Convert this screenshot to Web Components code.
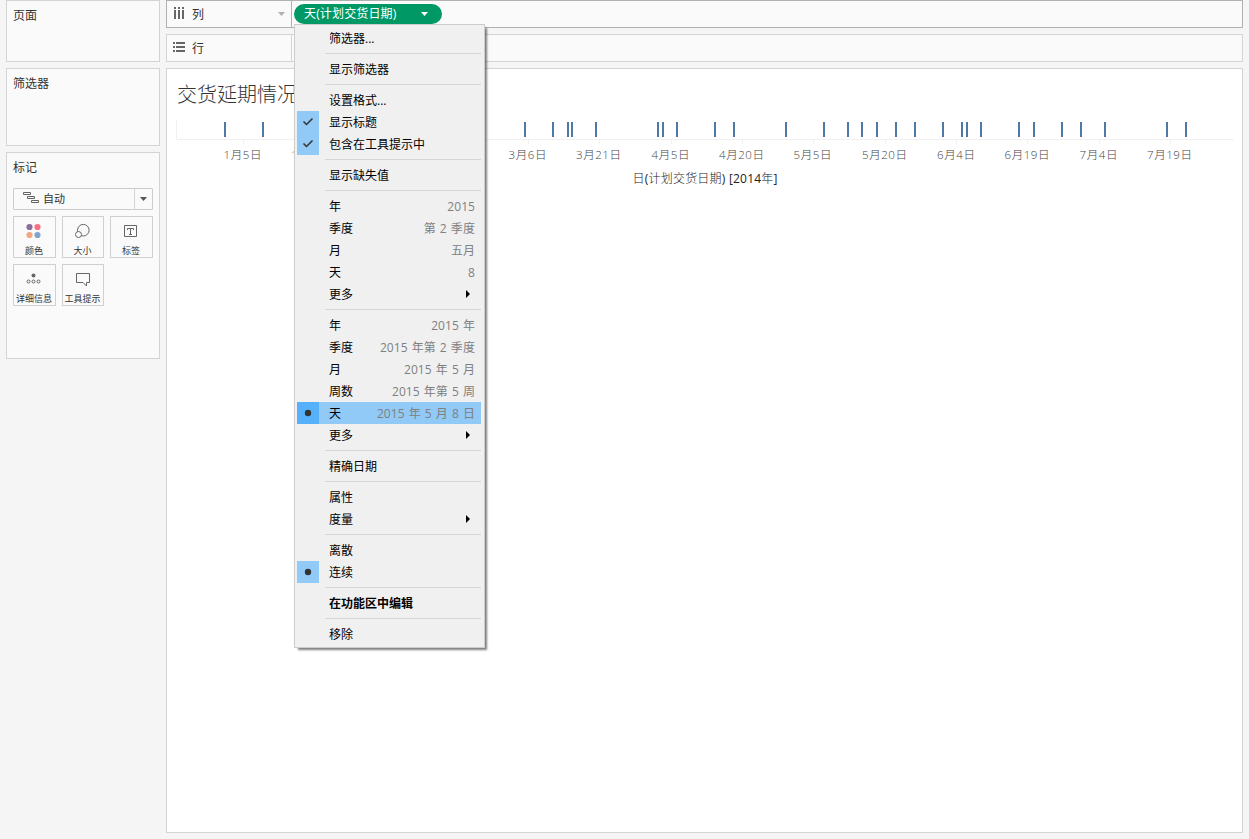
<!DOCTYPE html>
<html lang="zh-CN">
<head>
<meta charset="utf-8">
<title>交货延期情况</title>
<style>
html,body{margin:0;height:100%;overflow:hidden;background:#f5f5f5}
body{font:12px "Open Sans","Noto Sans CJK SC",sans-serif;color:#333}
</style>
</head>
<body>
<work-book></work-book>
<script>
const define = (name, html, setup) => customElements.define(name, class extends HTMLElement {
  connectedCallback() {
    if (this.shadowRoot) return;
    const t = document.createElement('template');
    t.innerHTML = typeof html === 'function' ? html(this) : html;
    this.attachShadow({mode: 'open'}).append(t.content.cloneNode(true));
    if (setup) setup(this);
  }
});

define('side-card', `
<style>
:host{display:flex;flex-direction:column;box-sizing:border-box;background:#fafafa;border:1px solid #d4d4d4;padding:6px 6px 0}
h2{margin:0;font-size:12px;font-weight:400;line-height:18px;height:18px}
</style><h2><slot name="title"></slot></h2><slot></slot>`);

define('mark-type', `
<style>
:host{display:flex;box-sizing:border-box;height:22px;margin-top:11px;border:1px solid #ccc;border-radius:1px;font-size:11px;line-height:19px}
.v{flex:1;display:flex;padding-left:9px;gap:3px}
.d{width:17px;border-left:1px solid #d4d4d4;display:flex;align-items:center;justify-content:center}
svg{display:block}
</style>
<div class="v"><svg width="17" height="20" fill="none" stroke="#666"><path d="M.5 3.500h7v2h-7zM4.500 7.500h7v2h-7zM8.500 11.500h7v2h-7z"/></svg><span>自动</span></div>
<div class="d"><svg width="7" height="4"><path d="M0 0h7L3.500 4z" fill="#555"/></svg></div>`);

const glyphs = {
  color: '<circle cx="4.500" cy="4" r="3.100" fill="#86709b"/><circle cx="12.500" cy="4" r="3.100" fill="#fb6f82"/><circle cx="4.500" cy="12" r="3.100" fill="#f4a680"/><circle cx="12.500" cy="12" r="3.100" fill="#83a3cf"/>',
  size: '<circle cx="9.300" cy="7.200" r="5.800" fill="none" stroke="#666"/><circle cx="4.500" cy="11.500" r="3" fill="#fafafa" stroke="#666"/>',
  label: '<path d="M2.500 2.500h12v11h-12z" fill="none" stroke="#666"/><path d="M5.500 7V5.500h6V7M8.500 5.500v6M7 11.500h3" fill="none" stroke="#666"/>',
  detail: '<circle cx="8.500" cy="4.500" r="2" fill="#666"/><g fill="none" stroke="#666"><circle cx="3.500" cy="10.500" r="1.500"/><circle cx="8.500" cy="10.500" r="1.500"/><circle cx="13.500" cy="10.500" r="1.500"/></g>',
  tooltip: '<path d="M2.500 2.500h13v9H12.500v3.500L9 11.500H2.500z" fill="none" stroke="#666" stroke-linejoin="round"/>'
};
define('mark-button', el => `
<style>
:host{display:flex;flex-direction:column;align-items:center;box-sizing:border-box;height:42px;border:1px solid #d0d0d0;padding:6px 1px 0 0;font-size:9px;line-height:13px;white-space:nowrap}
svg{display:block;flex:none;margin-left:-1px}
span{margin-top:4px}
</style><svg width="17" height="17">${glyphs[el.getAttribute('icon')]}</svg><span><slot></slot></span>`);

define('shelf-bar', el => `
<style>
:host{--line:#d4d4d4;display:flex;box-sizing:border-box;height:28px;border:1px solid var(--line);background:#fafafa}
:host([active]){--line:#b0b0b0}
.h{width:112px;border-right:1px solid var(--line);display:flex;align-items:center;padding:0 6px}
.h span{margin-left:7px;flex:1;line-height:20px;position:relative;top:1px}
.c{padding:3px 0 0 2px;display:flex;align-items:flex-start}
.g{margin-top:-2px}
</style>
<div class="h"><svg class="g" width="12" height="12" fill="#666">${el.hasAttribute('active')
  ? '<path d="M1 0h2v2H1zM5 0h2v2H5zM9 0h2v2H9zM1 3h2v9H1zM5 3h2v9H5zM9 3h2v9H9z"/>'
  : '<path d="M0 1h2v2H0zM3 1h9v2H3zM0 5h2v2H0zM3 5h9v2H3zM0 9h2v2H0zM3 9h9v2H3z"/>'}</svg>
<span><slot name="title"></slot></span>${el.hasAttribute('active') ? '<svg width="7" height="4"><path d="M0 0h7L3.500 4z" fill="#b0b0b0"/></svg>' : ''}</div>
<div class="c"><slot></slot></div>`);

define('field-pill', `
<style>
:host{display:flex;align-items:center;box-sizing:border-box;width:148px;height:20px;border-radius:10px;background:#009966;color:#fff;padding:0 14px 0 10px;justify-content:space-between;line-height:20px;letter-spacing:.15px}
</style><span><slot></slot></span><svg width="7" height="4"><path d="M0 0h7L3.500 4z" fill="#fff"/></svg>`);

define('date-chart', () => {
  const marks = [225,263,525,553,568,572,596,658,663,677,715,734,786,824,848,862,877,896,915,943,962,967,981,1019,1034,1062,1081,1105,1167,1186];
  const ticks = [[243,'1月5日'],[314,'1月20日'],[528,'3月6日'],[599,'3月21日'],[671,'4月5日'],[742,'4月20日'],[813,'5月5日'],[885,'5月20日'],[956.5,'6月4日'],[1027.5,'6月19日'],[1099,'7月4日'],[1170,'7月19日']];
  return `
<style>
:host{display:block}
svg{display:block}
text{font-family:"Open Sans","Noto Sans CJK SC",sans-serif;font-size:11.500px;font-weight:300;fill:#444;text-anchor:middle}
.t{font-size:12px;fill:#222}
.n{font-weight:400}
</style>
<svg width="1075" height="76" viewBox="167 116 1075 76">
<path d="M176.500 120v19.500H1234" fill="none" stroke="#f0f0f0"/>
${marks.map(x => `<rect x="${x - 1}" y="122" width="2" height="15" fill="#4e79a7"/>`).join('')}
${ticks.map(([x, s]) => `<path d="M${Math.floor(x) + .5} 140v4" stroke="#f0f0f0"/><text x="${x - .5}" y="159" textLength="${s.length === 4 ? 38 : 45}">${s}</text>`).join('')}
<text class="t" x="705" y="183" textLength="145">日<tspan class="n">(</tspan>计划交货日期<tspan class="n">) [2014</tspan>年<tspan class="n">]</tspan></text>
</svg>`;
});

define('view-sheet', `
<style>
:host{display:block;box-sizing:border-box;height:765px;background:#fff;border:1px solid #d4d4d4}
h1{margin:0;padding:11px 0 0 10px;height:36px;line-height:28px;font-size:20px;font-weight:300;font-family:"Noto Sans CJK SC",sans-serif;color:#333}
</style><h1><slot></slot></h1><date-chart></date-chart>`);

define('menu-item', el => {
  const c = el.getAttribute('mark');
  const mark = c === 'check' ? '<path d="M6.500 10.500l3 3L15.500 7.500" fill="none" stroke="#333" stroke-width="1.500"/>' : c === 'dot' ? '<circle cx="11" cy="11" r="3.200" fill="#333"/>' : '';
  const hint = el.getAttribute('hint');
  return `
<style>
:host{display:flex;height:22px;line-height:24px;color:#000}
:host([strong]){font-weight:700}
:host([on]){background:#91c9f7}
.g{width:22px;flex:none}
:host([mark]) .g{background:#91c9f7}
:host([on]) .g{background:#56b0fa}
svg{display:block}
.l{margin-left:10px;flex:1;white-space:nowrap}
.h{color:#808080;margin-right:6px;white-space:nowrap;word-spacing:.9px;letter-spacing:.06px}
.a{align-self:center;margin-right:11px;margin-top:-1px}
</style><div class="g"><svg width="22" height="22">${mark}</svg></div><span class="l"><slot></slot></span>${hint ? `<span class="h">${hint}</span>` : ''}${el.hasAttribute('more') ? '<svg class="a" width="4" height="8"><path d="M0 0l4 4-4 4z" fill="#000"/></svg>' : ''}`;
});

define('menu-line', `<style>:host{display:block;height:1px;margin:4px 0 4px 28px;background:#d5d5d5}</style>`);

define('field-menu', `
<style>
:host{display:block;box-sizing:border-box;width:191px;height:624px;padding:2px 3px 2px 2px;background:#f0f0f0;border:1px solid #ccc;box-shadow:3px 3px 2px -1px rgba(0,0,0,.5)}
</style>
<menu-item>筛选器...</menu-item><menu-line></menu-line>
<menu-item>显示筛选器</menu-item><menu-line></menu-line>
<menu-item>设置格式...</menu-item><menu-item mark="check">显示标题</menu-item><menu-item mark="check">包含在工具提示中</menu-item><menu-line></menu-line>
<menu-item>显示缺失值</menu-item><menu-line></menu-line>
<menu-item hint="2015">年</menu-item><menu-item hint="第 2 季度">季度</menu-item><menu-item hint="五月">月</menu-item><menu-item hint="8">天</menu-item><menu-item more>更多</menu-item><menu-line></menu-line>
<menu-item hint="2015 年">年</menu-item><menu-item hint="2015 年第 2 季度">季度</menu-item><menu-item hint="2015 年 5 月">月</menu-item><menu-item hint="2015 年第 5 周">周数</menu-item><menu-item on mark="dot" hint="2015 年 5 月 8 日">天</menu-item><menu-item more>更多</menu-item><menu-line></menu-line>
<menu-item>精确日期</menu-item><menu-line></menu-line>
<menu-item>属性</menu-item><menu-item more>度量</menu-item><menu-line></menu-line>
<menu-item>离散</menu-item><menu-item mark="dot">连续</menu-item><menu-line></menu-line>
<menu-item strong>在功能区中编辑</menu-item><menu-line></menu-line>
<menu-item>移除</menu-item>`);

define('work-book', `
<style>
:host{display:grid;grid-template-columns:154px 1077px;column-gap:6px;padding-left:6px;height:839px;box-sizing:border-box;position:relative}
aside,main{display:flex;flex-direction:column;gap:6px}
.p{height:62px}.f{height:78px}.m{height:207px}
.b{display:grid;grid-template-columns:43px 42px 43px;gap:6px;margin-top:6px}
field-menu{position:absolute;left:294px;top:24px}
</style>
<aside>
<side-card class="p"><span slot="title">页面</span></side-card>
<side-card class="f"><span slot="title">筛选器</span></side-card>
<side-card class="m"><span slot="title">标记</span><mark-type></mark-type>
<div class="b"><mark-button icon="color">颜色</mark-button><mark-button icon="size">大小</mark-button><mark-button icon="label">标签</mark-button><mark-button icon="detail">详细信息</mark-button><mark-button icon="tooltip">工具提示</mark-button></div></side-card>
</aside>
<main>
<shelf-bar active><span slot="title">列</span><field-pill>天(计划交货日期)</field-pill></shelf-bar>
<shelf-bar><span slot="title">行</span></shelf-bar>
<view-sheet>交货延期情况</view-sheet>
</main>
<field-menu></field-menu>`);
</script>
</body>
</html>
